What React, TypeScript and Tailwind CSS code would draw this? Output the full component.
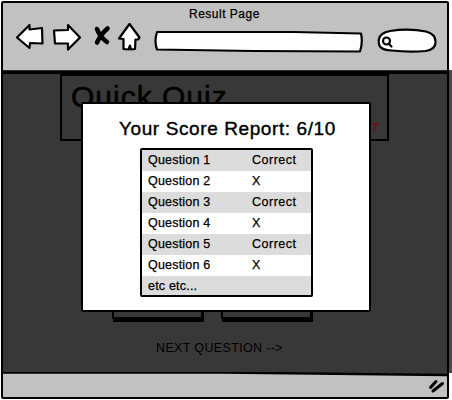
import type { ReactNode } from "react";

const rows = [
  ["Question 1", "Correct"],
  ["Question 2", "X"],
  ["Question 3", "Correct"],
  ["Question 4", "X"],
  ["Question 5", "Correct"],
  ["Question 6", "X"],
  ["etc etc...", ""],
];

function Sketch({ w, h, className, children }: { w: number; h: number; className: string; children: ReactNode }) {
  return (
    <svg
      width={w}
      height={h}
      viewBox={`0 0 ${w} ${h}`}
      className={className}
      fill="white"
      stroke="black"
      strokeWidth="2.2"
      strokeLinejoin="round"
      strokeLinecap="round"
    >
      {children}
    </svg>
  );
}

function Toolbar() {
  return (
    <header className="h-[67px] shrink-0 bg-[#c1c1c1]">
      <h1 className="h-[20px] pt-[3px] pl-[186px] text-[12px] leading-[16px] tracking-[0.5px] whitespace-nowrap">Result Page</h1>
      <div className="flex items-start pl-[12px]">
        <Sketch w={30} h={28} className="shrink-0">
          <path d="M2 14.500 14.500 2v4.500L27 5l.5 15.500-12.500-.5-.5 5Z" />
        </Sketch>
        <Sketch w={32} h={30} className="ml-[6px] shrink-0">
          <path d="M3 7.500 17 7V2l12 12.500L17 26.500v-6L4 20.500Z" />
        </Sketch>
        <Sketch w={20} h={24} className="ml-[9px] mt-[1px] shrink-0">
          <path d="M5 5Q8 13 15 18M15.500 4.500Q9 10 5 18.500" strokeWidth="4.600" fill="none" />
        </Sketch>
        <Sketch w={26} h={30} className="ml-[5px] shrink-0">
          <path d="M12.500 1 22.500 14.500 21 16.500h-2.500l-.5 9.500-4 .5-1-4-1.500 4-5-.5V16l-4.500-.5Z" />
        </Sketch>
        <Sketch w={212} h={26} className="ml-[10px] mt-[5px] shrink-0">
          <path d="M4 4 140 4 208 5.500q2 9-1 18L100 23 4 21.500q-3-8 0-17.500Z" />
        </Sketch>
        <Sketch w={62} h={28} className="ml-[12px] mt-[4px] shrink-0">
          <path d="M13 4Q32 1 49 4.500q10 2.500 9.500 11 0 7-10 8.500-16 1.500-34-.5C2 23 1 18 2 12q1-6 11-8Z" />
          <circle cx="9.500" cy="14" r="3.500" />
          <path d="m12 17 2.500 2.500" />
        </Sketch>
      </div>
    </header>
  );
}

function ScoreReport() {
  return (
    <section className="absolute left-[81px] top-[102px] flex h-[210px] w-[290px] flex-col rounded-[2px] border-2 border-black bg-white">
      <h2 className="mt-[13px] pl-[36px] text-[19px] leading-[24px] tracking-[0.6px] whitespace-nowrap [-webkit-text-stroke:0.4px_#000]">
        Your Score Report: 6/10
      </h2>
      <div className="mt-[7px] ml-[57px] flex h-[149px] w-[173px] flex-col overflow-hidden rounded-[2px] border-2 border-black">
        {rows.map(([name, result]) => (
          <div key={name} className="flex h-[21px] shrink-0 pl-[6px] text-[12.500px] leading-[20px] tracking-[0.2px] odd:bg-[#dcdcdc]">
            <span className="w-[104px]">{name}</span>
            <span className="tracking-[0.5px]">{result}</span>
          </div>
        ))}
      </div>
    </section>
  );
}

function ButtonEdge() {
  return <div className="h-[24px] w-[91px] border-2 border-black shadow-[1px_3px_0_#000]" />;
}

export default function App() {
  return (
    <div className="relative h-[400px] w-[452px] overflow-hidden bg-white font-['Liberation_Sans',sans-serif] text-black [-webkit-text-stroke:0.25px_#000]">
      <div className="flex">
        <div className="mt-px ml-px flex h-[398px] w-[448px] flex-col rounded-[2px] border-2 border-black">
          <Toolbar />
          <div className="h-[4px] shrink-0 border-t border-[#2a2a2a] bg-black" />
          <main className="h-[298px] shrink-0 bg-[#383838]">
            <div className="ml-[57px] flex h-[67px] w-[329px] justify-between border-2 border-black">
              <span className="pl-[9px] pt-[3px] text-[30px] leading-[36px] tracking-[1px] whitespace-nowrap [-webkit-text-stroke:0.6px_#000]">
                Quick Quiz
              </span>
              <span className="self-end pr-[8px] pb-[3px] text-[13px] font-bold leading-[16px] text-[#6b1216] [-webkit-text-stroke:0px]">7</span>
            </div>
            <div className="mt-[154px] ml-[109px] flex gap-[18px]">
              <ButtonEdge />
              <ButtonEdge />
            </div>
            <p className="mt-[21px] pl-[153px] text-[12.500px] leading-[16px] tracking-[0.35px] whitespace-nowrap [-webkit-text-stroke:0px]">NEXT QUESTION --&gt;</p>
          </main>
          <footer className="flex grow bg-[#c1c1c1]">
            <svg width="444" height="25" viewBox="0 0 444 25" fill="none" stroke="black" strokeLinecap="round">
              <path d="M220 0H444V2.500Z" fill="#383838" stroke="none" />
              <path d="M0 .5H220L444 3" strokeWidth="2.300" />
              <path d="m427.500 15.500 5.500-6m-3 9.500 9.500-7.500" strokeWidth="3" />
            </svg>
          </footer>
        </div>
        <div className="mt-[70px] h-[303px] w-[3px] bg-[#484848]" />
      </div>
      <ScoreReport />
    </div>
  );
}
